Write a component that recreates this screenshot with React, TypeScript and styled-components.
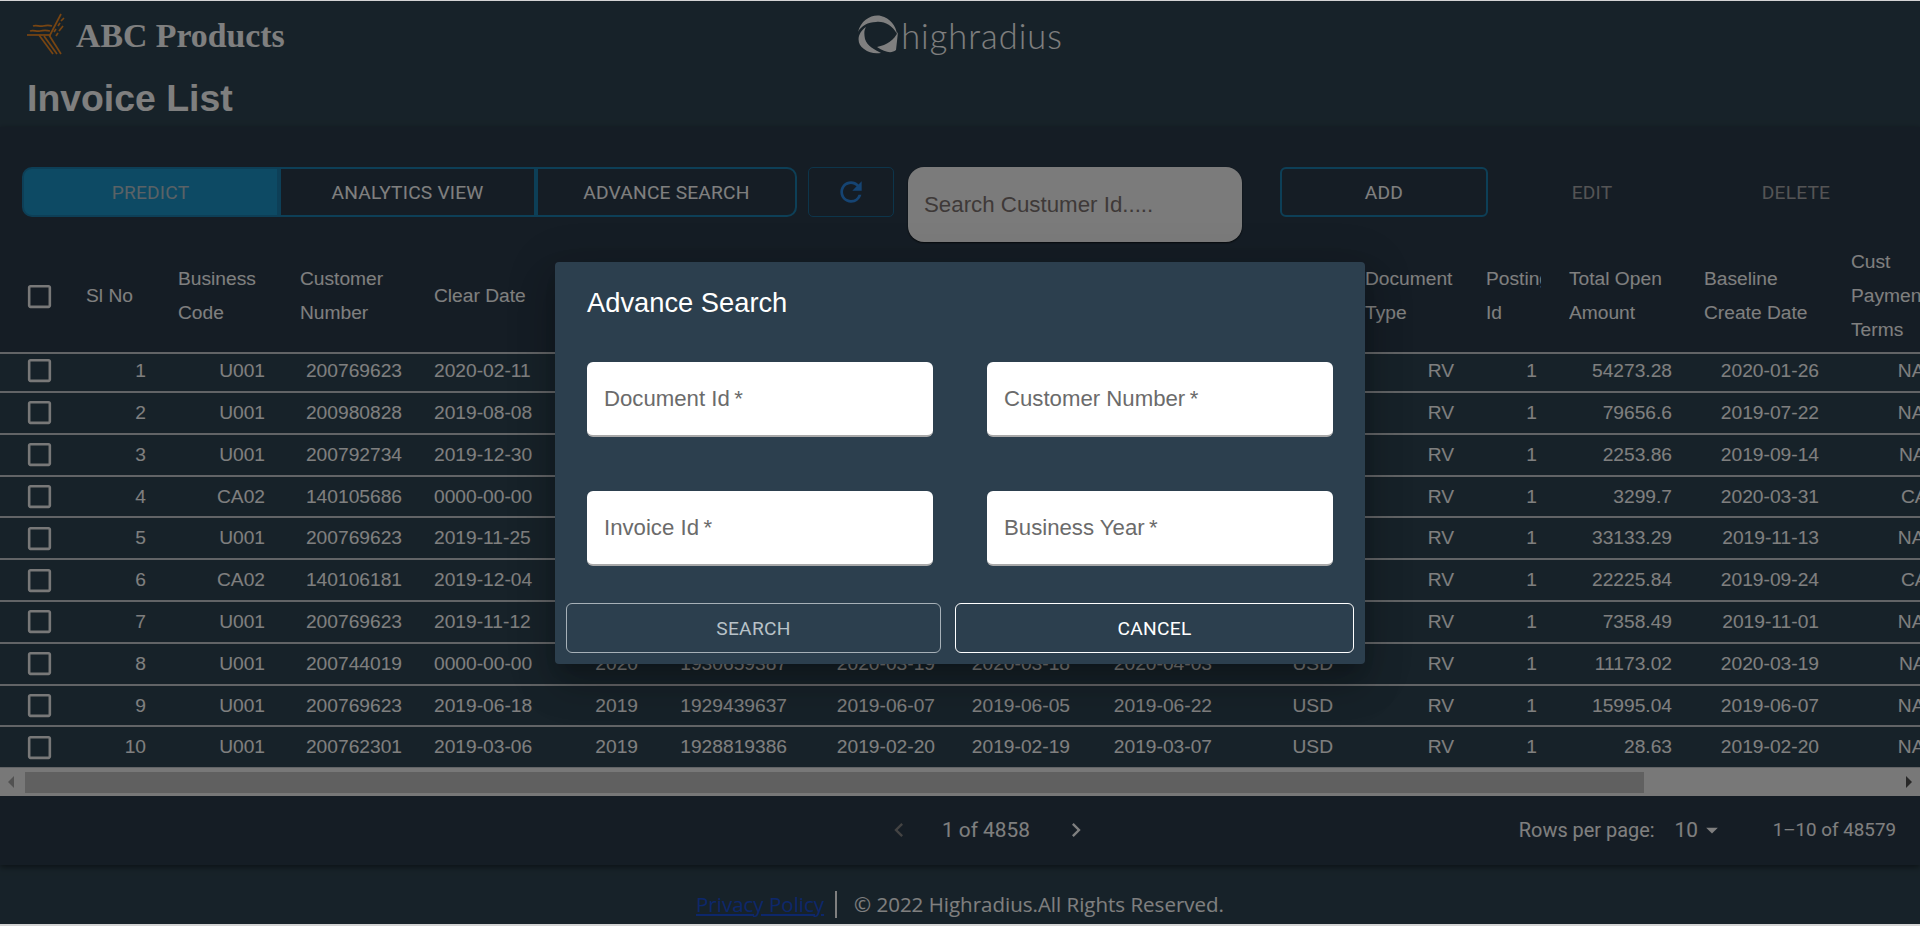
import styled, { createGlobalStyle } from "styled-components";
import {
  MdRefresh,
  MdKeyboardArrowLeft,
  MdKeyboardArrowRight,
  MdArrowDropDown,
} from "react-icons/md";

const GlobalStyle = createGlobalStyle`
  html, body {
    margin: 0;
    padding: 0;
    background: #d4d4d4;
    overflow: hidden;
  }
  * { box-sizing: border-box; }
`;

const Page = styled.div`
  position: relative;
  width: 1920px;
  height: 926px;
  padding: 1px 0 2px;
  overflow: hidden;
  font-family: "Liberation Sans", Arial, sans-serif;
  color: #fff;
  display: flex;
  flex-direction: column;
`;

const Header = styled.header`
  height: 126px;
  flex: none;
  background: #2f4552;
  padding: 0 27px;
`;

const TopBar = styled.div`
  height: 70px;
  display: grid;
  grid-template-columns: 1fr auto 1fr;
  align-items: center;
`;

const Brand = styled.div`
  display: flex;
  align-items: center;
  margin-left: -7px;
`;

const BrandName = styled.span`
  font-family: "Liberation Serif", "Times New Roman", serif;
  font-weight: 700;
  font-size: 33.8px;
`;

const HrLogo = styled.div`
  display: flex;
  align-items: center;
  gap: 2px;
`;

const HrName = styled.span`
  font-family: Lato, sans-serif;
  font-weight: 300;
  font-size: 34.4px;
  letter-spacing: 1px;
  line-height: 1;
  padding-top: 1px;
`;

const Title = styled.h1`
  margin: 0;
  font-size: 37.4px;
  line-height: 42px;
  font-weight: 700;
  position: relative;
  top: 6px;
`;

const Main = styled.main`
  flex: none;
  height: 738px;
  background: #2b3b4b;
  box-shadow: 0 2px 6px rgba(0, 0, 0, 0.5);
  position: relative;
  padding-top: 40px;
`;

const Toolbar = styled.div`
  display: flex;
  align-items: flex-start;
  height: 75px;
  padding-left: 22px;
`;

const Tabs = styled.div`
  display: flex;
  width: 775px;
`;

const ToolButton = styled.button<{ $active?: boolean; $first?: boolean; $last?: boolean }>`
  flex: ${({ $last }) => ($last ? "0 0 261px" : "0 0 257px")};
  height: 50px;
  padding: 0;
  font-family: Roboto, sans-serif;
  font-size: 19.2px;
  letter-spacing: 0.2px;
  font-weight: 400;
  text-transform: uppercase;
  background: ${({ $active }) => ($active ? "#1b95c8" : "transparent")};
  color: ${({ $active }) => ($active ? "#b4c4cc" : "#fff")};
  border: 2px solid #1b7fae;
  border-radius: ${({ $first, $last }) =>
    $first ? "10px 0 0 10px" : $last ? "0 10px 10px 0" : "0"};
`;

const RefreshButton = styled.button`
  width: 86px;
  height: 50px;
  margin-left: 11px;
  display: flex;
  align-items: center;
  justify-content: center;
  background: transparent;
  border: 1px solid #1a6a96;
  border-radius: 5px;
  color: #2a88e6;
  padding: 0;
`;

const SearchBox = styled.div`
  width: 334px;
  height: 75px;
  margin-left: 14px;
  background: #f6f6f6;
  border-radius: 16px;
  box-shadow: 0 1px 2px rgba(0, 0, 0, 0.7);
  padding: 23px 16px 0;
  font-size: 22.3px;
  color: #7d7370;
  line-height: 30px;
`;

const ActionGroup = styled.div`
  display: flex;
  margin-left: 38px;
`;

const ActionButton = styled.button<{ $outlined?: boolean }>`
  width: 208px;
  height: 50px;
  padding: 0;
  font-family: Roboto, sans-serif;
  font-size: 19.2px;
  letter-spacing: 0.2px;
  font-weight: 400;
  text-transform: uppercase;
  background: transparent;
  color: ${({ $outlined }) => ($outlined ? "#fff" : "#a8a8aa")};
  border: ${({ $outlined }) => ($outlined ? "2px solid #1b7fae" : "none")};
  border-radius: 6px;
  margin-right: ${({ $outlined }) => ($outlined ? "0" : "-4px")};
`;

const TableWrap = styled.div`
  overflow: hidden;
  width: 1920px;
`;

const columns =
  "70px 92px 119px 137px 125px 111px 149px 148px 135px 142px 121px 121px 83px 135px 147px 130px";

const HeadRow = styled.div`
  display: grid;
  grid-template-columns: ${columns};
  width: 1965px;
  height: 112px;
  padding-bottom: 2px;
  border-bottom: 2px solid #c4c8cc;
  align-items: center;
`;

const HeadCell = styled.div<{ $indent?: number }>`
  padding: 0 12px 0 ${({ $indent }) => 16 + ($indent ?? 0)}px;
  font-size: 19.2px;
  line-height: 33.8px;
  overflow: hidden;
`;

const HeadLine = styled.span`
  display: block;
  white-space: nowrap;
  overflow: hidden;
`;

const Row = styled.div`
  display: grid;
  grid-template-columns: ${columns};
  width: 1965px;
  height: 41.8px;
  align-items: center;
  background: #2f4552;
  border-bottom: 2px solid #c4c8cc;
  &:first-child {
    height: 39px;
    padding-bottom: 4px;
  }
`;

const Cell = styled.div`
  padding: 0 16px;
  font-size: 19.2px;
  line-height: 33.6px;
  text-align: right;
  white-space: nowrap;
`;

const BoxCell = styled.div`
  display: flex;
  justify-content: center;
  padding-left: 8px;
  color: #f0f0f0;
`;

const ScrollBar = styled.div`
  height: 28px;
  margin-top: -1px;
  background: #f1f1f1;
  display: flex;
  align-items: center;
  padding: 0 8px;
`;

const ScrollArrow = styled.span<{ $right?: boolean }>`
  width: 0;
  height: 0;
  border-top: 6px solid transparent;
  border-bottom: 6px solid transparent;
  ${({ $right }) =>
    $right ? "border-left: 6px solid #505050;" : "border-right: 6px solid #a3a3a3;"}
`;

const ScrollThumb = styled.div`
  height: 21px;
  width: 1619px;
  margin-left: 11px;
  margin-right: auto;
  background: #c1c1c1;
`;

const Pagination = styled.div`
  height: 68px;
  display: flex;
  align-items: center;
  padding: 0 24px 0 885px;
  font-family: Roboto, sans-serif;
`;

const PageArrow = styled.span<{ $disabled?: boolean }>`
  display: flex;
  color: ${({ $disabled }) => ($disabled ? "#868686" : "#fff")};
`;

const PageLabel = styled.span`
  font-size: 20.8px;
  margin: 0 32px 0 29px;
`;

const RowsLabel = styled.span`
  font-size: 19.9px;
  margin-left: 429px;
`;

const RowsValue = styled.span`
  font-size: 20.8px;
  margin-left: 20px;
`;

const RowsRange = styled.span`
  font-size: 18.8px;
  margin-left: auto;
`;

const Footer = styled.footer`
  flex: 1;
  background: #2f4552;
  display: flex;
  align-items: center;
  justify-content: center;
  padding-top: 19px;
  font-family: "Open Sans", "Noto Sans", sans-serif;
  font-size: 20.5px;
`;

const PolicyLink = styled.a`
  color: #1a4fd6;
  text-decoration: underline;
  padding-right: 11px;
  border-right: 2px solid #fff;
  line-height: 27px;
`;

const Copy = styled.span`
  margin-left: 17px;
`;

const Backdrop = styled.div`
  position: absolute;
  inset: 1px 0 2px;
  background: rgba(0, 0, 0, 0.5);
`;

const Modal = styled.div`
  position: absolute;
  left: 555px;
  top: 262px;
  width: 810px;
  height: 402px;
  background: #2c3f4e;
  border-radius: 4px;
  box-shadow: 0 11px 15px -7px rgba(0, 0, 0, 0.2), 0 24px 38px 3px rgba(0, 0, 0, 0.14),
    0 9px 46px 8px rgba(0, 0, 0, 0.12);
  padding: 0 11px;
`;

const ModalTitle = styled.h2`
  margin: 0;
  padding: 22px 21px 0;
  height: 100px;
  font-weight: 400;
  font-size: 27.3px;
  line-height: 38px;
`;

const FieldGrid = styled.div`
  display: grid;
  grid-template-columns: 346px 346px;
  column-gap: 54px;
  row-gap: 54px;
  padding-left: 21px;
`;

const Field = styled.div`
  height: 75px;
  background: #fff;
  border-radius: 6px;
  border-bottom: 2px solid #a9a9a9;
  padding: 22px 17px 0;
  font-size: 22.2px;
  line-height: 30px;
  color: #6b6b6b;
`;

const ModalActions = styled.div`
  display: flex;
  margin-top: 37px;
  gap: 14px;
`;

const ModalButton = styled.button<{ $primary?: boolean; $width: number }>`
  width: ${({ $width }) => $width}px;
  height: 50px;
  padding: 0;
  background: transparent;
  border: 1px solid ${({ $primary }) => ($primary ? "#fff" : "#a7b1b8")};
  border-radius: 6px;
  color: ${({ $primary }) => ($primary ? "#fff" : "#b8c2c8")};
  font-family: Roboto, sans-serif;
  font-size: 19.2px;
  letter-spacing: 0.3px;
  font-weight: 400;
  text-transform: uppercase;
`;

const AbcMark = () => (
  <svg width="56" height="56" viewBox="0 0 56 56" fill="none" stroke="#f08a24" strokeWidth="1.7">
    <path d="M7 27H31" />
    <path d="M10 23c4-1.500 6 1 10 0s6-1 10 0" />
    <path d="M13 18c4-1.500 6 1 10 0s6-1 9 0" />
    <path d="M30 27L41 6" />
    <path d="M34 24l2-3m2-3l2-3m1-2l3-3" />
    <path d="M36 28l2-3m1-2l4-5" />
    <path d="M19 27l14 19" />
    <path d="M24 28l13 18" />
    <path d="M29 27l12 19" />
  </svg>
);

const HrMark = () => (
  <svg width="42" height="44" viewBox="6 4 42 44" fill="#fff">
    <path d="M7 22C10 10 21 4 30 6c9 2 15 10 16 18-5-9-13-13-21-12-8 0-15 4-18 10z" />
    <path d="M15 17c-9 6-10 17-2 22 5 4 11 5 17 4-6-3-14-7-16-14-1-5-1-9 1-12z" />
    <path d="M47 22l-2 18c-5 4-11 2-19-3 10-2 17-7 21-15z" />
  </svg>
);

const CheckIcon = () => (
  <svg width="31" height="31" viewBox="0 0 24 24" fill="currentColor">
    <path d="M19 5v14H5V5h14m0-2H5c-1.100 0-2 .9-2 2v14c0 1.100.9 2 2 2h14c1.100 0 2-.9 2-2V5c0-1.100-.9-2-2-2z" />
  </svg>
);

const heads = [
  ["Sl No"],
  ["Business", "Code"],
  ["Customer", "Number"],
  ["Clear Date"],
  ["Business", "Year"],
  ["Document Id"],
  ["Posting", "Date"],
  ["Document", "Create Date"],
  ["Due In", "Date"],
  ["Invoice", "Currency"],
  ["Document", "Type"],
  ["Posting", "Id"],
  ["Total Open", "Amount"],
  ["Baseline", "Create Date"],
  ["Cust", "Payment", "Terms"],
];

const rows = [
  ["1", "U001", "200769623", "2020-02-11", "2020", "1930438491", "2020-01-26", "2020-01-25", "2020-02-10", "USD", "RV", "1", "54273.28", "2020-01-26", "NAH4"],
  ["2", "U001", "200980828", "2019-08-08", "2019", "1929646410", "2019-07-22", "2019-07-22", "2019-08-11", "USD", "RV", "1", "79656.6", "2019-07-22", "NAD1"],
  ["3", "U001", "200792734", "2019-12-30", "2019", "1929873765", "2019-09-14", "2019-09-14", "2019-09-29", "USD", "RV", "1", "2253.86", "2019-09-14", "NAA8"],
  ["4", "CA02", "140105686", "0000-00-00", "2020", "2960623488", "2020-03-30", "2020-03-30", "2020-04-10", "CAD", "RV", "1", "3299.7", "2020-03-31", "CA10"],
  ["5", "U001", "200769623", "2019-11-25", "2019", "1930147974", "2019-11-13", "2019-11-13", "2019-11-28", "USD", "RV", "1", "33133.29", "2019-11-13", "NAH4"],
  ["6", "CA02", "140106181", "2019-12-04", "2019", "2960581231", "2019-09-20", "2019-09-20", "2019-10-04", "CAD", "RV", "1", "22225.84", "2019-09-24", "CA10"],
  ["7", "U001", "200769623", "2019-11-12", "2019", "1930083372", "2019-11-01", "2019-11-01", "2019-11-16", "USD", "RV", "1", "7358.49", "2019-11-01", "NAH4"],
  ["8", "U001", "200744019", "0000-00-00", "2020", "1930659387", "2020-03-19", "2020-03-18", "2020-04-03", "USD", "RV", "1", "11173.02", "2020-03-19", "NAA8"],
  ["9", "U001", "200769623", "2019-06-18", "2019", "1929439637", "2019-06-07", "2019-06-05", "2019-06-22", "USD", "RV", "1", "15995.04", "2019-06-07", "NAH4"],
  ["10", "U001", "200762301", "2019-03-06", "2019", "1928819386", "2019-02-20", "2019-02-19", "2019-03-07", "USD", "RV", "1", "28.63", "2019-02-20", "NAC6"],
];

const App = () => {
  return (
    <Page>
      <GlobalStyle />
      <Header>
        <TopBar>
          <Brand>
            <AbcMark />
            <BrandName>ABC Products</BrandName>
          </Brand>
          <HrLogo>
            <HrMark />
            <HrName>highradius</HrName>
          </HrLogo>
          <span />
        </TopBar>
        <Title>Invoice List</Title>
      </Header>

      <Main>
        <Toolbar>
          <Tabs>
            <ToolButton $active $first>
              Predict
            </ToolButton>
            <ToolButton>Analytics View</ToolButton>
            <ToolButton $last>Advance Search</ToolButton>
          </Tabs>
          <RefreshButton>
            <MdRefresh size={32} />
          </RefreshButton>
          <SearchBox>Search Custumer Id.....</SearchBox>
          <ActionGroup>
            <ActionButton $outlined>Add</ActionButton>
            <ActionButton>Edit</ActionButton>
            <ActionButton>Delete</ActionButton>
          </ActionGroup>
        </Toolbar>

        <TableWrap>
          <HeadRow>
            <BoxCell>
              <CheckIcon />
            </BoxCell>
            {heads.map((lines, i) => (
              <HeadCell key={i} $indent={i === 2 ? 3 : 0}>
                {lines.map((line) => (
                  <HeadLine key={line}>{line}</HeadLine>
                ))}
              </HeadCell>
            ))}
          </HeadRow>
          <div>
            {rows.map((row) => (
              <Row key={row[0]}>
                <BoxCell>
                  <CheckIcon />
                </BoxCell>
                {row.map((value, i) => (
                  <Cell key={i}>{value}</Cell>
                ))}
              </Row>
            ))}
          </div>
        </TableWrap>

        <ScrollBar>
          <ScrollArrow />
          <ScrollThumb />
          <ScrollArrow $right />
        </ScrollBar>

        <Pagination>
          <PageArrow $disabled>
            <MdKeyboardArrowLeft size={28} />
          </PageArrow>
          <PageLabel>1 of 4858</PageLabel>
          <PageArrow>
            <MdKeyboardArrowRight size={28} />
          </PageArrow>
          <RowsLabel>Rows per page:</RowsLabel>
          <RowsValue>10</RowsValue>
          <PageArrow>
            <MdArrowDropDown size={28} />
          </PageArrow>
          <RowsRange>1–10 of 48579</RowsRange>
        </Pagination>
      </Main>

      <Footer>
        <PolicyLink href="#">Privacy Policy</PolicyLink>
        <Copy>© 2022 Highradius.All Rights Reserved.</Copy>
      </Footer>

      <Backdrop />

      <Modal>
        <ModalTitle>Advance Search</ModalTitle>
        <FieldGrid>
          <Field>Document Id{"\u2009"}*</Field>
          <Field>Customer Number{"\u2009"}*</Field>
          <Field>Invoice Id{"\u2009"}*</Field>
          <Field>Business Year{"\u2009"}*</Field>
        </FieldGrid>
        <ModalActions>
          <ModalButton $width={375}>Search</ModalButton>
          <ModalButton $primary $width={399}>
            Cancel
          </ModalButton>
        </ModalActions>
      </Modal>
    </Page>
  );
};

export default App;
